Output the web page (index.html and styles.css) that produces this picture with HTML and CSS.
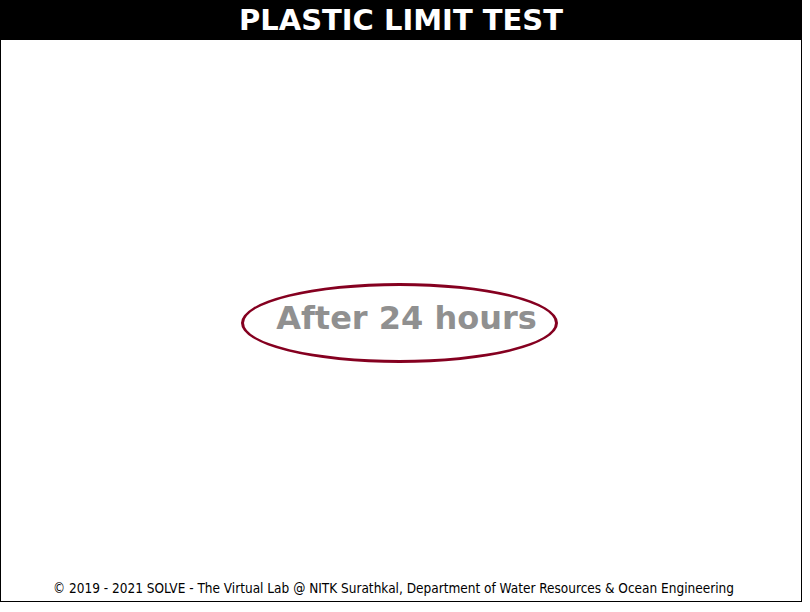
FILE: index.html
```html
<!DOCTYPE html>
<html>
<head>
<meta charset="utf-8">
<title>Plastic Limit Test</title>
<link rel="stylesheet" href="styles.css">
</head>
<body>
<div class="frame">
  <header class="title-bar">
    <h1 class="title">PLASTIC LIMIT TEST</h1>
  </header>
  <main class="stage">
    <div class="oval">
      <span class="oval-text">After 24 hours</span>
    </div>
  </main>
  <footer class="footer">© 2019 - 2021 SOLVE - The Virtual Lab @ NITK Surathkal, Department of Water Resources &amp; Ocean Engineering</footer>
</div>
</body>
</html>
```
FILE: styles.css
```css
html, body {
  margin: 0;
  padding: 0;
  background: #ffffff;
}
.frame {
  width: 800px;
  height: 600px;
  border: 1px solid #000000;
  display: flex;
  flex-direction: column;
  font-family: "DejaVu Sans", Verdana, sans-serif;
}
.title-bar {
  height: 39px;
  background: #000000;
  display: flex;
  align-items: center;
  justify-content: center;
}
.title {
  margin: 0;
  color: #ffffff;
  font-size: 29px;
  font-weight: bold;
  line-height: 1;
}
.stage {
  flex: 1;
  display: flex;
  align-items: center;
  justify-content: center;
  padding-top: 40px;
}
.oval {
  box-sizing: border-box;
  width: 317px;
  height: 80px;
  margin-right: 3px;
  border: 3px solid #850020;
  border-radius: 50%;
  display: flex;
  align-items: center;
  justify-content: center;
  padding: 0 0 10px 14px;
}
.oval-text {
  color: #909090;
  font-size: 32px;
  font-weight: bold;
}
.footer {
  height: 36px;
  box-sizing: border-box;
  padding: 15px 15px 0 0;
  text-align: center;
  font-size: 13.5px;
  color: #000000;
  font-family: "DejaVu Sans Condensed", "DejaVu Sans", sans-serif;
}
```
